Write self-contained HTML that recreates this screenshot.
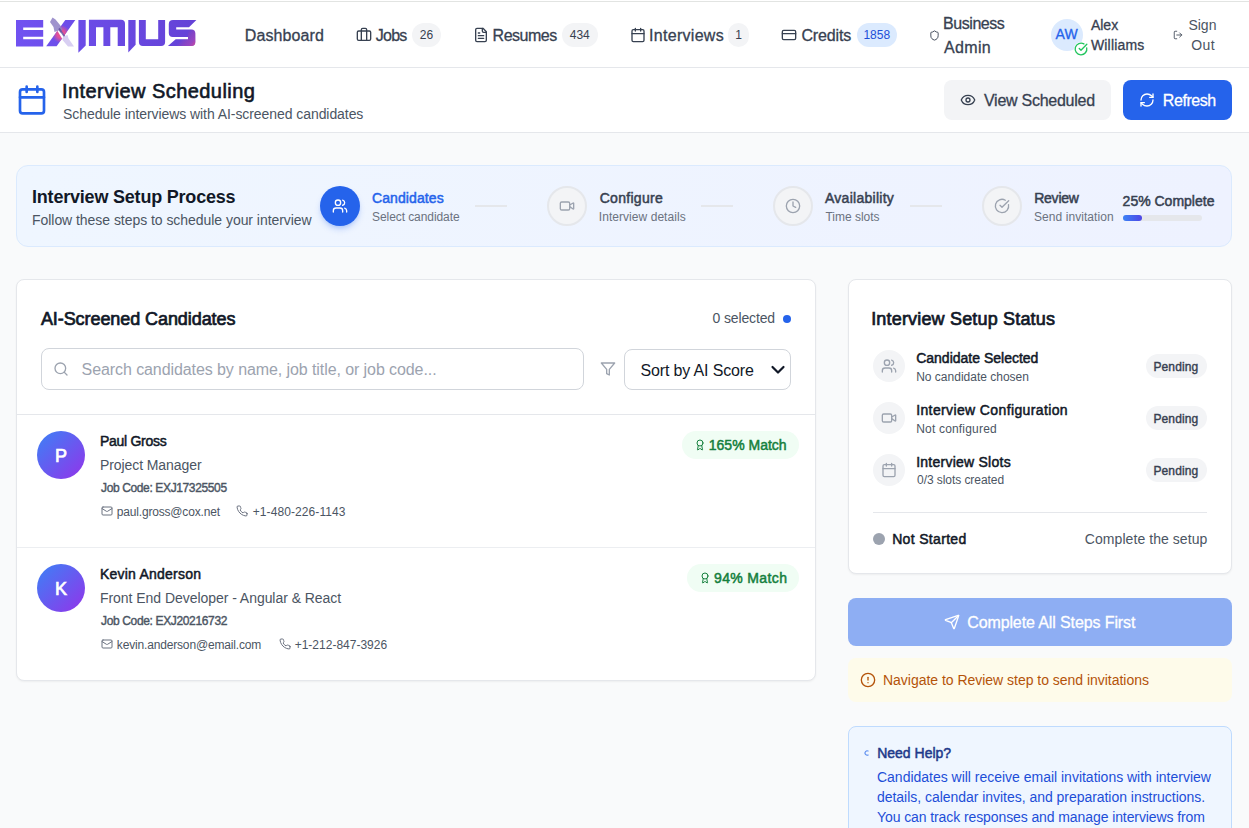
<!DOCTYPE html>
<html><head><meta charset="utf-8">
<style>
*{box-sizing:border-box;margin:0;padding:0}
html,body{width:1249px;height:828px;overflow:hidden}
body{font-family:"Liberation Sans",sans-serif;background:#f9fafb;color:#111827;position:relative}
.t{position:absolute;white-space:nowrap}
.r{position:absolute}
.i{position:absolute;fill:none;stroke:currentColor;stroke-linecap:round;stroke-linejoin:round;overflow:visible}
.med{-webkit-text-stroke:0.25px currentColor}
</style></head>
<body>

<div class="r" style="left:0px;top:0px;width:1249px;height:68px;background:#fff;"></div>
<div class="r" style="left:0px;top:1px;width:1249px;height:1px;background:#e2e4e2;"></div>
<div class="r" style="left:0px;top:67px;width:1249px;height:1px;background:#e5e7eb;"></div>
<svg class="r" style="left:0;top:0" width="210" height="60" viewBox="0 0 210 60">
<defs>
<linearGradient id="lg" gradientUnits="userSpaceOnUse" x1="16" y1="0" x2="196" y2="0">
<stop offset="0" stop-color="#7052f1"/><stop offset="1" stop-color="#6442d6"/></linearGradient>
<linearGradient id="pk" gradientUnits="userSpaceOnUse" x1="184" y1="36" x2="197" y2="47"><stop offset="0" stop-color="#f0487f" stop-opacity="0"/><stop offset="0.55" stop-color="#c04ab0" stop-opacity="0.5"/><stop offset="1" stop-color="#f0487f"/></linearGradient>
<radialGradient id="xg" gradientUnits="userSpaceOnUse" cx="61" cy="34" r="9"><stop offset="0" stop-color="#f2508a"/><stop offset="0.45" stop-color="#e0509a"/><stop offset="1" stop-color="#e0509a" stop-opacity="0"/></radialGradient>
</defs>
<g fill="url(#lg)">
<path d="M16 20H43.2V27.6H23.2V30H43.2V36.8H23.2V39.2H43.2V46.4H16Z"/>
<path d="M46.2 46.2H56.6L75.3 20.1H65.3Z"/>
<path d="M78.4 20H85.7V45.5L78.4 52.8Z"/>
<path d="M88.9 19.8H121Q125 19.8 125 23.8V46H117.7V27.2H110.3V46H103.4V27.2H96V46H88.9Z"/>
<path d="M128.3 20H135.6V44.7L128.3 52.5Z"/>
<path d="M138.9 20H145.8V39.2H158.2V20H165.1V42Q165.1 46 161.1 46H142.9Q138.9 46 138.9 42Z"/>
<path d="M173 20H196.4L189 27.2H176.2V29.5H191.3Q195.3 29.5 195.3 33.5V42Q195.3 46 191.3 46H167.9L175.7 39.2H188V36.9H172.8Q168.8 36.9 168.8 32.9V24Q168.8 20 173 20Z"/>
</g>
<path d="M46.2 46.2H56.6L75.3 20.1H65.3Z" fill="url(#xg)"/>
<path d="M175.7 39.2H188V29.5H191.3Q195.3 29.5 195.3 33.5V42Q195.3 46 191.3 46H167.9Z" fill="url(#pk)"/>
<path d="M58 28L63 33.5L64.5 38L62 38.5L57.5 31Z" fill="#fff"/>
<path d="M50 22L52.5 17.5L55.5 19.5L60 25L62.5 29L61 33L58.5 30.5L54.5 32L53.5 27Z" fill="#8e80c4" opacity="0.85"/>
<path d="M59 28.5L65.5 38" stroke="#5d4d9e" stroke-width="1.8" opacity="0.8"/>
<path d="M63 37L66 35.5L67.5 35L68.5 38.5L74 46.6H68L62.5 40Z" fill="#d8cff2"/>
</svg>
<div class="t" id="t0" style="left:244.80px;top:28.00px;font-size:16px;line-height:16px;color:#374151;letter-spacing:0.090px;-webkit-text-stroke:0.3px currentColor;">Dashboard</div>
<svg class="i" style="left:356px;top:26.5px;color:#374151;" width="16" height="16" viewBox="0 0 24 24" stroke-width="2"><path d="M16 20V4a2 2 0 0 0-2-2h-4a2 2 0 0 0-2 2v16"/><rect x="2" y="6" width="20" height="14" rx="2"/></svg>
<div class="t" id="t1" style="left:375.80px;top:28.00px;font-size:16px;line-height:16px;color:#374151;letter-spacing:-0.780px;-webkit-text-stroke:0.3px currentColor;">Jobs</div>
<div class="t" style="left:412px;top:23px;width:29px;height:24px;border-radius:12px;background:#f3f4f6;color:#374151;font-size:12px;line-height:24px;text-align:center">26</div>
<svg class="i" style="left:473px;top:26.5px;color:#374151;" width="16" height="16" viewBox="0 0 24 24" stroke-width="2"><path d="M15 2H6a2 2 0 0 0-2 2v16a2 2 0 0 0 2 2h12a2 2 0 0 0 2-2V7Z"/><path d="M14 2v4a2 2 0 0 0 2 2h4"/><path d="M10 9H8"/><path d="M16 13H8"/><path d="M16 17H8"/></svg>
<div class="t" id="t2" style="left:492.60px;top:28.00px;font-size:16px;line-height:16px;color:#374151;letter-spacing:-0.495px;-webkit-text-stroke:0.3px currentColor;">Resumes</div>
<div class="t" style="left:561.5px;top:23px;width:36.5px;height:24px;border-radius:12px;background:#f3f4f6;color:#374151;font-size:12px;line-height:24px;text-align:center">434</div>
<svg class="i" style="left:629.5px;top:26.5px;color:#374151;" width="16" height="16" viewBox="0 0 24 24" stroke-width="2"><rect x="3" y="4" width="18" height="18" rx="2"/><path d="M16 2v4M8 2v4M3 10h18"/></svg>
<div class="t" id="t3" style="left:649.00px;top:28.00px;font-size:16px;line-height:16px;color:#374151;letter-spacing:0.300px;-webkit-text-stroke:0.3px currentColor;">Interviews</div>
<div class="t" style="left:728px;top:23px;width:21px;height:24px;border-radius:12px;background:#f3f4f6;color:#374151;font-size:12px;line-height:24px;text-align:center">1</div>
<svg class="i" style="left:781px;top:26.5px;color:#374151;" width="16" height="16" viewBox="0 0 24 24" stroke-width="2"><rect x="2" y="5" width="20" height="14" rx="2"/><path d="M2 10h20"/></svg>
<div class="t" id="t4" style="left:801.40px;top:28.00px;font-size:16px;line-height:16px;color:#374151;letter-spacing:-0.120px;-webkit-text-stroke:0.3px currentColor;">Credits</div>
<div class="t" style="left:856.5px;top:23px;width:40.5px;height:24px;border-radius:12px;background:#dbeafe;color:#1d4ed8;font-size:12px;line-height:24px;text-align:center">1858</div>
<svg class="i" style="left:929px;top:29.7px;color:#374151;" width="11" height="11" viewBox="0 0 24 24" stroke-width="2"><path d="M20 13c0 5-3.5 7.5-7.66 8.95a1 1 0 0 1-.67-.01C7.5 20.5 4 18 4 13V6a1 1 0 0 1 1-1c2 0 4.5-1.2 6.24-2.72a1.17 1.17 0 0 1 1.52 0C14.51 3.81 17 5 19 5a1 1 0 0 1 1 1z"/></svg>
<div class="t" id="t5" style="left:943.00px;top:15.50px;font-size:16px;line-height:16px;color:#374151;letter-spacing:-0.437px;-webkit-text-stroke:0.3px currentColor;">Business</div>
<div class="t" id="t6" style="left:944.00px;top:39.90px;font-size:16px;line-height:16px;color:#374151;letter-spacing:0.338px;-webkit-text-stroke:0.3px currentColor;">Admin</div>
<div class="r" style="left:1051px;top:19px;width:32px;height:32px;background:#dbeafe;border-radius:50%"></div>
<div class="t" id="t7" style="left:1055.60px;top:27.40px;font-size:14px;line-height:14px;color:#2563eb;-webkit-text-stroke:0.3px currentColor;">AW</div>
<div class="r" style="left:1074px;top:42px;width:14px;height:14px;border-radius:50%;background:#fff"></div>
<svg class="i" style="left:1073.8px;top:41.8px;color:#22c55e;" width="14" height="14" viewBox="0 0 24 24" stroke-width="2.3"><path d="M21.801 10A10 10 0 1 1 17 3.335"/><path d="m9 11 3 3L22 4"/></svg>
<div class="t" id="t8" style="left:1090.90px;top:17.60px;font-size:14px;line-height:14px;color:#374151;-webkit-text-stroke:0.3px currentColor;">Alex</div>
<div class="t" id="t9" style="left:1090.90px;top:38.00px;font-size:14px;line-height:14px;color:#374151;letter-spacing:0.193px;-webkit-text-stroke:0.3px currentColor;">Williams</div>
<svg class="i" style="left:1173px;top:30px;color:#374151;" width="10" height="10" viewBox="0 0 24 24" stroke-width="2"><path d="M9 21H5a2 2 0 0 1-2-2V5a2 2 0 0 1 2-2h4"/><polyline points="16 17 21 12 16 7"/><line x1="21" x2="9" y1="12" y2="12"/></svg>
<div class="t" id="t10" style="left:1188.40px;top:17.60px;font-size:14px;line-height:14px;color:#4b5563;">Sign</div>
<div class="t" id="t11" style="left:1191.30px;top:38.00px;font-size:14px;line-height:14px;color:#4b5563;letter-spacing:0.405px;">Out</div>
<div class="r" style="left:0px;top:68px;width:1249px;height:64px;background:#fff;"></div>
<div class="r" style="left:0px;top:132px;width:1249px;height:1px;background:#e5e7eb;"></div>
<svg class="i" style="left:16px;top:84px;color:#2563eb;" width="32" height="32" viewBox="0 0 24 24" stroke-width="2"><rect x="3" y="4" width="18" height="18" rx="2"/><path d="M16 2v4M8 2v4M3 10h18"/></svg>
<div class="t" id="t12" style="left:62.00px;top:80.60px;font-size:20px;line-height:20px;color:#111827;-webkit-text-stroke:0.6px currentColor;letter-spacing:0.436px;">Interview Scheduling</div>
<div class="t" id="t13" style="left:63.00px;top:107.00px;font-size:14px;line-height:14px;color:#4b5563;letter-spacing:-0.068px;">Schedule interviews with AI-screened candidates</div>
<div class="r" style="left:944px;top:80px;width:167px;height:40px;background:#f3f4f6;border-radius:8px"></div>
<svg class="i" style="left:960.2px;top:92px;color:#374151;" width="16" height="16" viewBox="0 0 24 24" stroke-width="2"><path d="M2.062 12.348a1 1 0 0 1 0-.696 10.75 10.75 0 0 1 19.876 0 1 1 0 0 1 0 .696 10.75 10.75 0 0 1-19.876 0"/><circle cx="12" cy="12" r="3"/></svg>
<div class="t" id="t14" style="left:984.00px;top:93.00px;font-size:16px;line-height:16px;color:#374151;letter-spacing:-0.263px;-webkit-text-stroke:0.3px currentColor;">View Scheduled</div>
<div class="r" style="left:1123px;top:80px;width:109px;height:40px;background:#2563eb;border-radius:8px"></div>
<svg class="i" style="left:1139px;top:91.5px;color:#fff;" width="16" height="16" viewBox="0 0 24 24" stroke-width="2"><path d="M3 12a9 9 0 0 1 9-9 9.75 9.75 0 0 1 6.74 2.74L21 8"/><path d="M21 3v5h-5"/><path d="M21 12a9 9 0 0 1-9 9 9.75 9.75 0 0 1-6.74-2.74L3 16"/><path d="M8 16H3v5"/></svg>
<div class="t" id="t15" style="left:1162.80px;top:93.00px;font-size:16px;line-height:16px;color:#fff;letter-spacing:-0.435px;-webkit-text-stroke:0.3px currentColor;">Refresh</div>
<div class="r" style="left:16px;top:165px;width:1216px;height:82px;border:1px solid #dbeafe;border-radius:12px;background:linear-gradient(90deg,#eff6ff,#eef2ff)"></div>
<div class="t" id="t16" style="left:32.00px;top:188.00px;font-size:18px;line-height:18px;color:#111827;font-weight:700;letter-spacing:-0.205px;">Interview Setup Process</div>
<div class="t" id="t17" style="left:32.00px;top:213.40px;font-size:14px;line-height:14px;color:#4b5563;letter-spacing:-0.045px;">Follow these steps to schedule your interview</div>
<div class="r" style="left:320px;top:186px;width:40px;height:40px;border-radius:50%;background:#2563eb;box-shadow:0 4px 6px -1px rgba(37,99,235,.25),0 2px 4px -2px rgba(37,99,235,.2)"></div>
<svg class="i" style="left:332px;top:198px;color:#fff;" width="16" height="16" viewBox="0 0 24 24" stroke-width="2"><path d="M16 21v-2a4 4 0 0 0-4-4H6a4 4 0 0 0-4 4v2"/><circle cx="9" cy="7" r="4"/><path d="M22 21v-2a4 4 0 0 0-3-3.87"/><path d="M16 3.13a4 4 0 0 1 0 7.75"/></svg>
<div class="t" id="t18" style="left:372.00px;top:190.80px;font-size:14px;line-height:14px;color:#2563eb;-webkit-text-stroke:0.5px currentColor;letter-spacing:0.100px;">Candidates</div>
<div class="t" id="t19" style="left:372.00px;top:211.20px;font-size:12px;line-height:12px;color:#6b7280;letter-spacing:-0.072px;">Select candidate</div>
<div class="r" style="left:475px;top:205px;width:32px;height:2px;background:#e5e7eb;"></div>
<div class="r" style="left:547px;top:186px;width:40px;height:40px;border-radius:50%;background:#f3f4f6;border:2px solid #e5e7eb"></div>
<svg class="i" style="left:559px;top:198px;color:#9ca3af;" width="16" height="16" viewBox="0 0 24 24" stroke-width="2"><path d="m16 13 5.223 3.482a.5.5 0 0 0 .777-.416V7.870a.5.5 0 0 0-.752-.432L16 10.5"/><rect x="2" y="6" width="14" height="12" rx="2"/></svg>
<div class="t" id="t20" style="left:599.70px;top:191.00px;font-size:14px;line-height:14px;color:#374151;-webkit-text-stroke:0.5px currentColor;letter-spacing:0.293px;">Configure</div>
<div class="t" id="t21" style="left:598.80px;top:211.20px;font-size:12px;line-height:12px;color:#6b7280;letter-spacing:0.051px;">Interview details</div>
<div class="r" style="left:701px;top:205px;width:32px;height:2px;background:#e5e7eb;"></div>
<div class="r" style="left:773px;top:186px;width:40px;height:40px;border-radius:50%;background:#f3f4f6;border:2px solid #e5e7eb"></div>
<svg class="i" style="left:785px;top:198px;color:#9ca3af;" width="16" height="16" viewBox="0 0 24 24" stroke-width="2"><circle cx="12" cy="12" r="10"/><polyline points="12 6 12 12 16 14"/></svg>
<div class="t" id="t22" style="left:825.00px;top:190.80px;font-size:14px;line-height:14px;color:#374151;-webkit-text-stroke:0.5px currentColor;letter-spacing:0.270px;">Availability</div>
<div class="t" id="t23" style="left:825.40px;top:211.00px;font-size:12px;line-height:12px;color:#6b7280;">Time slots</div>
<div class="r" style="left:910px;top:205px;width:32px;height:2px;background:#e5e7eb;"></div>
<div class="r" style="left:982px;top:186px;width:40px;height:40px;border-radius:50%;background:#f3f4f6;border:2px solid #e5e7eb"></div>
<svg class="i" style="left:994px;top:198px;color:#9ca3af;" width="16" height="16" viewBox="0 0 24 24" stroke-width="2"><path d="M21.801 10A10 10 0 1 1 17 3.335"/><path d="m9 11 3 3L22 4"/></svg>
<div class="t" id="t24" style="left:1034.20px;top:190.60px;font-size:14px;line-height:14px;color:#374151;-webkit-text-stroke:0.5px currentColor;letter-spacing:-0.234px;">Review</div>
<div class="t" id="t25" style="left:1034.00px;top:211.00px;font-size:12px;line-height:12px;color:#6b7280;letter-spacing:0.064px;">Send invitation</div>
<div class="t" id="t26" style="left:1122.60px;top:193.80px;font-size:14px;line-height:14px;color:#374151;-webkit-text-stroke:0.5px currentColor;">25% Complete</div>
<div class="r" style="left:1122.6px;top:215px;width:79px;height:6px;background:#e5e7eb;border-radius:3px"></div>
<div class="r" style="left:1122.6px;top:215px;width:19.5px;height:6px;background:linear-gradient(90deg,#3b82f6,#4f46e5);border-radius:3px"></div>
<div class="r" style="left:16px;top:279px;width:800px;height:402px;background:#fff;border:1px solid #e5e7eb;border-radius:8px;box-shadow:0 1px 2px rgba(0,0,0,.05)"></div>
<div class="t" id="t27" style="left:40.90px;top:309.70px;font-size:18px;line-height:18px;color:#111827;-webkit-text-stroke:0.7px currentColor;letter-spacing:-0.073px;">AI-Screened Candidates</div>
<div class="t" id="t28" style="left:712.60px;top:311.10px;font-size:14px;line-height:14px;color:#4b5563;letter-spacing:-0.150px;">0 selected</div>
<div class="r" style="left:783px;top:314.5px;width:8px;height:8px;background:#2563eb;border-radius:50%"></div>
<div class="r" style="left:41px;top:348px;width:543px;height:42px;border:1px solid #d1d5db;border-radius:8px"></div>
<svg class="i" style="left:52.5px;top:360.5px;color:#9ca3af;" width="16" height="16" viewBox="0 0 24 24" stroke-width="2"><circle cx="11" cy="11" r="8"/><path d="m21 21-4.3-4.3"/></svg>
<div class="t" id="t29" style="left:81.60px;top:361.90px;font-size:16px;line-height:16px;color:#9ca3af;letter-spacing:-0.085px;">Search candidates by name, job title, or job code...</div>
<svg class="i" style="left:600px;top:361px;color:#9ca3af;" width="16" height="16" viewBox="0 0 24 24" stroke-width="2"><polygon points="22 3 2 3 10 12.46 10 19 14 21 14 12.46 22 3"/></svg>
<div class="r" style="left:624px;top:349px;width:167px;height:41px;border:1px solid #d1d5db;border-radius:8px"></div>
<div class="t" id="t30" style="left:640.50px;top:362.90px;font-size:16px;line-height:16px;color:#111827;letter-spacing:-0.150px;">Sort by AI Score</div>
<svg class="r" style="left:770px;top:363px" width="16" height="14" viewBox="0 0 16 14"><path d="M2.5 4l5.5 5.5 5.5-5.5" fill="none" stroke="#111827" stroke-width="2.2" stroke-linecap="round" stroke-linejoin="round"/></svg>
<div class="r" style="left:17px;top:414px;width:798px;height:1px;background:#e5e7eb;"></div>
<div class="r" style="left:37px;top:431px;width:48px;height:48px;border-radius:50%;background:linear-gradient(135deg,#3b82f6,#9333ea)"></div>
<div class="t" id="t31" style="left:55.00px;top:446.90px;font-size:18px;line-height:18px;color:#fff;-webkit-text-stroke:0.7px currentColor;width:12px;text-align:center;">P</div>
<div class="t" id="t32" style="left:100.00px;top:434.10px;font-size:14px;line-height:14px;color:#111827;-webkit-text-stroke:0.5px currentColor;letter-spacing:-0.280px;">Paul Gross</div>
<div class="t" id="t33" style="left:100.00px;top:457.90px;font-size:14px;line-height:14px;color:#4b5563;letter-spacing:-0.084px;">Project Manager</div>
<div class="t" id="t34" style="left:101.00px;top:481.90px;font-size:12px;line-height:12px;color:#4b5563;-webkit-text-stroke:0.4px currentColor;letter-spacing:-0.368px;">Job Code: EXJ17325505</div>
<svg class="i" style="left:101px;top:505px;color:#6b7280;" width="12" height="12" viewBox="0 0 24 24" stroke-width="2"><rect x="2" y="4" width="20" height="16" rx="2"/><path d="m22 7-8.97 5.7a1.94 1.94 0 0 1-2.06 0L2 7"/></svg>
<div class="t" id="t35" style="left:116.80px;top:505.60px;font-size:12px;line-height:12px;color:#4b5563;letter-spacing:-0.180px;">paul.gross@cox.net</div>
<svg class="i" style="left:236px;top:505px;color:#6b7280;" width="12" height="12" viewBox="0 0 24 24" stroke-width="2"><path d="M22 16.92v3a2 2 0 0 1-2.18 2 19.79 19.79 0 0 1-8.63-3.07 19.5 19.5 0 0 1-6-6 19.79 19.79 0 0 1-3.07-8.67A2 2 0 0 1 4.11 2h3a2 2 0 0 1 2 1.72 12.84 12.84 0 0 0 .7 2.81 2 2 0 0 1-.45 2.11L8.09 9.91a16 16 0 0 0 6 6l1.27-1.27a2 2 0 0 1 2.11-.45 12.84 12.84 0 0 0 2.81.7A2 2 0 0 1 22 16.92z"/></svg>
<div class="t" id="t36" style="left:252.70px;top:505.50px;font-size:12px;line-height:12px;color:#4b5563;letter-spacing:0.090px;">+1-480-226-1143</div>
<div class="r" style="left:682px;top:431px;width:117px;height:28px;border-radius:14px;background:#f0fdf4"></div>
<svg class="i" style="left:693.9px;top:439px;color:#15803d;" width="12" height="12" viewBox="0 0 24 24" stroke-width="2"><path d="m15.477 12.89 1.515 8.526a.5.5 0 0 1-.81.47l-3.58-2.687a1 1 0 0 0-1.197 0l-3.586 2.686a.5.5 0 0 1-.81-.469l1.514-8.526"/><circle cx="12" cy="8" r="6"/></svg>
<div class="t" id="t37" style="left:708.80px;top:438.00px;font-size:14px;line-height:14px;color:#15803d;-webkit-text-stroke:0.5px currentColor;">165% Match</div>
<div class="r" style="left:17px;top:547px;width:798px;height:1px;background:#eceef1;"></div>
<div class="r" style="left:37px;top:564px;width:48px;height:48px;border-radius:50%;background:linear-gradient(135deg,#3b82f6,#9333ea)"></div>
<div class="t" id="t38" style="left:55.00px;top:579.90px;font-size:18px;line-height:18px;color:#fff;-webkit-text-stroke:0.7px currentColor;width:12px;text-align:center;">K</div>
<div class="t" id="t39" style="left:100.00px;top:567.10px;font-size:14px;line-height:14px;color:#111827;-webkit-text-stroke:0.5px currentColor;letter-spacing:0.222px;">Kevin Anderson</div>
<div class="t" id="t40" style="left:100.00px;top:590.90px;font-size:14px;line-height:14px;color:#4b5563;letter-spacing:-0.045px;">Front End Developer - Angular &amp; React</div>
<div class="t" id="t41" style="left:101.00px;top:614.90px;font-size:12px;line-height:12px;color:#4b5563;-webkit-text-stroke:0.4px currentColor;letter-spacing:-0.352px;">Job Code: EXJ20216732</div>
<svg class="i" style="left:101px;top:638px;color:#6b7280;" width="12" height="12" viewBox="0 0 24 24" stroke-width="2"><rect x="2" y="4" width="20" height="16" rx="2"/><path d="m22 7-8.97 5.7a1.94 1.94 0 0 1-2.06 0L2 7"/></svg>
<div class="t" id="t42" style="left:116.80px;top:638.60px;font-size:12px;line-height:12px;color:#4b5563;letter-spacing:-0.164px;">kevin.anderson@email.com</div>
<svg class="i" style="left:278.8px;top:638px;color:#6b7280;" width="12" height="12" viewBox="0 0 24 24" stroke-width="2"><path d="M22 16.92v3a2 2 0 0 1-2.18 2 19.79 19.79 0 0 1-8.63-3.07 19.5 19.5 0 0 1-6-6 19.79 19.79 0 0 1-3.07-8.67A2 2 0 0 1 4.11 2h3a2 2 0 0 1 2 1.72 12.84 12.84 0 0 0 .7 2.81 2 2 0 0 1-.45 2.11L8.09 9.91a16 16 0 0 0 6 6l1.27-1.27a2 2 0 0 1 2.11-.45 12.84 12.84 0 0 0 2.81.7A2 2 0 0 1 22 16.92z"/></svg>
<div class="t" id="t43" style="left:294.70px;top:638.50px;font-size:12px;line-height:12px;color:#4b5563;">+1-212-847-3926</div>
<div class="r" style="left:687px;top:564px;width:112px;height:28px;border-radius:14px;background:#f0fdf4"></div>
<svg class="i" style="left:699px;top:572px;color:#15803d;" width="12" height="12" viewBox="0 0 24 24" stroke-width="2"><path d="m15.477 12.89 1.515 8.526a.5.5 0 0 1-.81.47l-3.58-2.687a1 1 0 0 0-1.197 0l-3.586 2.686a.5.5 0 0 1-.81-.469l1.514-8.526"/><circle cx="12" cy="8" r="6"/></svg>
<div class="t" id="t44" style="left:714.00px;top:571.00px;font-size:14px;line-height:14px;color:#15803d;-webkit-text-stroke:0.5px currentColor;letter-spacing:0.360px;">94% Match</div>
<div class="r" style="left:848px;top:279px;width:384px;height:295px;background:#fff;border:1px solid #e5e7eb;border-radius:8px;box-shadow:0 1px 2px rgba(0,0,0,.05)"></div>
<div class="t" id="t45" style="left:871.20px;top:310.00px;font-size:18px;line-height:18px;color:#111827;-webkit-text-stroke:0.7px currentColor;letter-spacing:0.176px;">Interview Setup Status</div>
<div class="r" style="left:873px;top:350px;width:32px;height:32px;background:#f3f4f6;border-radius:50%"></div>
<svg class="i" style="left:881px;top:358px;color:#9ca3af;" width="16" height="16" viewBox="0 0 24 24" stroke-width="2"><path d="M16 21v-2a4 4 0 0 0-4-4H6a4 4 0 0 0-4 4v2"/><circle cx="9" cy="7" r="4"/><path d="M22 21v-2a4 4 0 0 0-3-3.87"/><path d="M16 3.13a4 4 0 0 1 0 7.75"/></svg>
<div class="t" id="t46" style="left:916.20px;top:350.90px;font-size:14px;line-height:14px;color:#111827;-webkit-text-stroke:0.5px currentColor;">Candidate Selected</div>
<div class="t" id="t47" style="left:916.20px;top:370.80px;font-size:12px;line-height:12px;color:#4b5563;">No candidate chosen</div>
<div class="r" style="left:1146px;top:354px;width:61px;height:24px;background:#f3f4f6;border-radius:12px"></div>
<div class="t" id="t48" style="left:1153.40px;top:361.30px;font-size:12px;line-height:12px;color:#374151;-webkit-text-stroke:0.4px currentColor;letter-spacing:0.135px;">Pending</div>
<div class="r" style="left:873px;top:402px;width:32px;height:32px;background:#f3f4f6;border-radius:50%"></div>
<svg class="i" style="left:881px;top:410px;color:#9ca3af;" width="16" height="16" viewBox="0 0 24 24" stroke-width="2"><path d="m16 13 5.223 3.482a.5.5 0 0 0 .777-.416V7.870a.5.5 0 0 0-.752-.432L16 10.5"/><rect x="2" y="6" width="14" height="12" rx="2"/></svg>
<div class="t" id="t49" style="left:916.20px;top:403.00px;font-size:14px;line-height:14px;color:#111827;-webkit-text-stroke:0.5px currentColor;letter-spacing:0.376px;">Interview Configuration</div>
<div class="t" id="t50" style="left:916.20px;top:422.70px;font-size:12px;line-height:12px;color:#4b5563;letter-spacing:0.187px;">Not configured</div>
<div class="r" style="left:1146px;top:406px;width:61px;height:24px;background:#f3f4f6;border-radius:12px"></div>
<div class="t" id="t51" style="left:1153.40px;top:413.30px;font-size:12px;line-height:12px;color:#374151;-webkit-text-stroke:0.4px currentColor;letter-spacing:0.135px;">Pending</div>
<div class="r" style="left:873px;top:454px;width:32px;height:32px;background:#f3f4f6;border-radius:50%"></div>
<svg class="i" style="left:881px;top:462px;color:#9ca3af;" width="16" height="16" viewBox="0 0 24 24" stroke-width="2"><rect x="3" y="4" width="18" height="18" rx="2"/><path d="M16 2v4M8 2v4M3 10h18"/></svg>
<div class="t" id="t52" style="left:916.20px;top:454.70px;font-size:14px;line-height:14px;color:#111827;-webkit-text-stroke:0.5px currentColor;letter-spacing:0.244px;">Interview Slots</div>
<div class="t" id="t53" style="left:917.10px;top:474.40px;font-size:12px;line-height:12px;color:#4b5563;letter-spacing:-0.068px;">0/3 slots created</div>
<div class="r" style="left:1146px;top:458px;width:61px;height:24px;background:#f3f4f6;border-radius:12px"></div>
<div class="t" id="t54" style="left:1153.40px;top:465.30px;font-size:12px;line-height:12px;color:#374151;-webkit-text-stroke:0.4px currentColor;letter-spacing:0.135px;">Pending</div>
<div class="r" style="left:873px;top:512px;width:334px;height:1px;background:#e5e7eb;"></div>
<div class="r" style="left:873px;top:533px;width:12px;height:12px;background:#9ca3af;border-radius:50%"></div>
<div class="t" id="t55" style="left:892.20px;top:532.40px;font-size:14px;line-height:14px;color:#111827;-webkit-text-stroke:0.5px currentColor;letter-spacing:0.324px;">Not Started</div>
<div class="t" id="t56" style="left:1084.80px;top:532.40px;font-size:14px;line-height:14px;color:#4b5563;letter-spacing:0.064px;">Complete the setup</div>
<div class="r" style="left:848px;top:598px;width:384px;height:48px;background:#8eaef3;border-radius:8px"></div>
<svg class="i" style="left:944px;top:614px;color:#fff;" width="16" height="16" viewBox="0 0 24 24" stroke-width="2"><path d="M14.536 21.686a.5.5 0 0 0 .937-.024l6.5-19a.496.496 0 0 0-.635-.635l-19 6.5a.5.5 0 0 0-.024.937l7.93 3.18a2 2 0 0 1 1.112 1.11z"/><path d="m21.854 2.147-10.94 10.939"/></svg>
<div class="t" id="t57" style="left:967.20px;top:615.00px;font-size:16px;line-height:16px;color:#fff;letter-spacing:-0.110px;-webkit-text-stroke:0.3px currentColor;">Complete All Steps First</div>
<div class="r" style="left:848px;top:658px;width:384px;height:44px;background:#fefbea;border-radius:8px"></div>
<svg class="i" style="left:860px;top:672px;color:#b45309;" width="16" height="16" viewBox="0 0 24 24" stroke-width="2"><circle cx="12" cy="12" r="10"/><line x1="12" x2="12" y1="8" y2="12"/><line x1="12" x2="12.01" y1="16" y2="16"/></svg>
<div class="t" id="t58" style="left:883.00px;top:672.80px;font-size:14px;line-height:14px;color:#b45309;letter-spacing:-0.024px;">Navigate to Review step to send invitations</div>
<div class="r" style="left:848px;top:726px;width:384px;height:140px;border:1px solid #bfdbfe;border-radius:8px;background:#eff6ff"></div>
<svg class="r" style="left:864px;top:750px" width="6" height="6" viewBox="0 0 6 6"><path d="M4.5 1.2A2.2 2.2 0 1 0 4.5 4.8" fill="none" stroke="#5b8def" stroke-width="1.1"/></svg>
<div class="t" id="t59" style="left:877.20px;top:745.90px;font-size:14px;line-height:14px;color:#1e3a8a;-webkit-text-stroke:0.5px currentColor;">Need Help?</div>
<div class="t" id="t60" style="left:877.00px;top:769.50px;font-size:14px;line-height:14px;color:#1d4ed8;letter-spacing:-0.013px;">Candidates will receive email invitations with interview</div>
<div class="t" id="t61" style="left:877.00px;top:789.50px;font-size:14px;line-height:14px;color:#1d4ed8;letter-spacing:-0.034px;">details, calendar invites, and preparation instructions.</div>
<div class="t" id="t62" style="left:877.00px;top:809.50px;font-size:14px;line-height:14px;color:#1d4ed8;letter-spacing:-0.094px;">You can track responses and manage interviews from</div>
</body></html>
